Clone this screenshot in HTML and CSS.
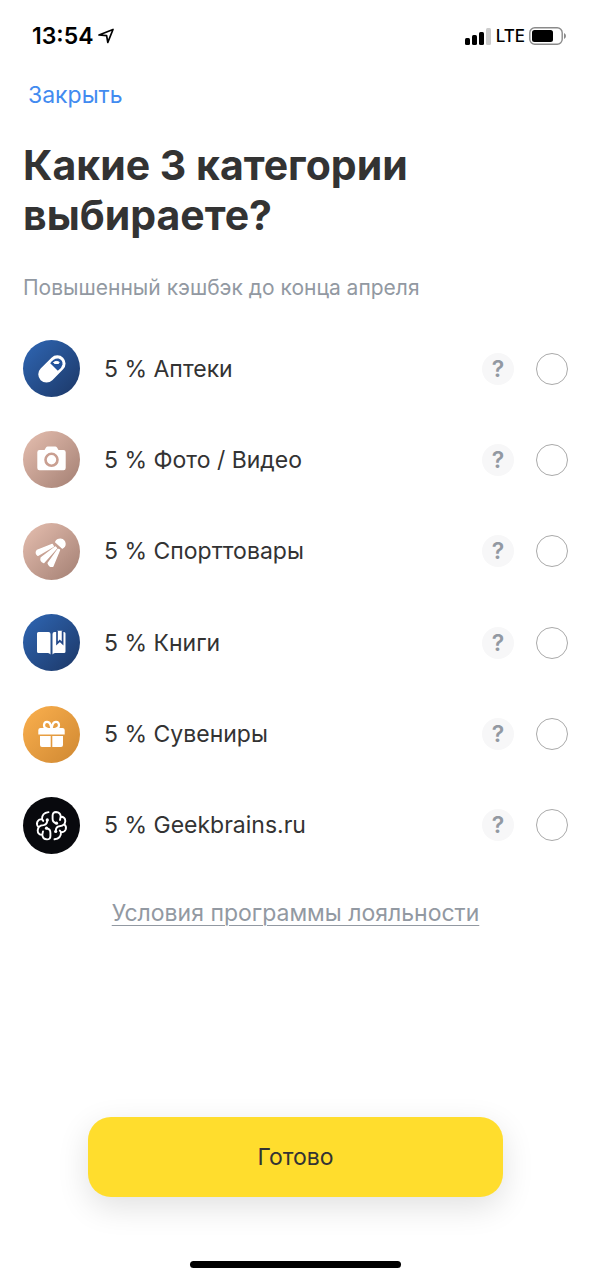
FILE: index.html
```html
<!DOCTYPE html>
<html lang="ru">
<head>
<meta charset="utf-8">
<meta name="viewport" content="width=device-width, initial-scale=1">
<title>Категории кэшбэка</title>
<link rel="stylesheet" href="styles.css">
</head>
<body>
<div class="screen">
  <header class="status">
    <div class="status-left">
      <span class="time">13:54</span>
      <svg class="location" viewBox="0 0 18 16" width="18" height="16" aria-hidden="true"><path d="M2 7 16 1.500 10.800 14.400 9.600 7.600Z" fill="none" stroke="#000" stroke-width="1.700" stroke-linejoin="round"/></svg>
    </div>
    <div class="status-right">
      <svg viewBox="0 0 27 17" width="27" height="17" aria-hidden="true"><rect x="0" y="10" width="5" height="7" rx="1.5"/><rect x="7" y="7" width="5" height="10" rx="1.5"/><rect x="14" y="4" width="5" height="13" rx="1.5"/><rect x="21" y="0" width="5" height="17" rx="1.5" fill="#ccc"/></svg>
      <span class="network">LTE</span>
      <svg viewBox="0 0 38 18" width="38" height="18" aria-hidden="true"><rect x=".8" y=".8" width="32.4" height="16.4" rx="5" fill="none" stroke="#8a8a8a" stroke-width="1.4"/><rect x="3" y="3" width="21" height="12" rx="2.5"/><path d="M35 6q2 1 2 3t-2 3Z" fill="#8a8a8a"/></svg>
    </div>
  </header>

  <nav class="nav"><button class="close" type="button">Закрыть</button></nav>

  <main class="content">
    <h1 class="title">Какие 3 категории выбираете?</h1>
    <p class="subtitle">Повышенный кэшбэк до конца апреля</p>

    <ul class="list">
      <li class="row">
        <svg class="icon blue" viewBox="0 0 57 57" aria-hidden="true">
          <path d="M23.500 34.300 34.300 23.500" stroke="#fff" stroke-width="16.500" stroke-linecap="round"/>
          <path d="M27.200 23.200Q31 17.800 35.500 18.500 40 20 39.500 24.500 38.800 28 34.800 30.800Z" fill="#24539b"/>
          <path d="M30.500 22.500Q33.200 20.400 36.200 22.200L35.500 23.500H31.500Z" fill="#fff" stroke="#fff" stroke-width="1" stroke-linejoin="round"/>
        </svg>
        <label class="name" for="c1">5 % Аптеки</label>
        <button class="help" type="button" aria-label="Подробнее: Аптеки">?</button>
        <input class="pick" id="c1" type="checkbox">
      </li>
      <li class="row">
        <svg class="icon rose" viewBox="0 0 57 57" aria-hidden="true">
          <path d="M16.500 19H21.500L23 16.500Q23.700 15.500 24.700 15.500H32.300Q33.300 15.500 34 16.500L35.500 19H40.500Q42.700 19 42.700 21.200V37Q42.700 39.200 40.500 39.200H16.500Q14.300 39.200 14.300 37V21.200Q14.300 19 16.500 19Z" fill="#fff"/>
          <circle cx="28.500" cy="28.800" r="6" fill="#fff" stroke="#c99f91" stroke-width="2.600"/>
        </svg>
        <label class="name" for="c2">5 % Фото / Видео</label>
        <button class="help" type="button" aria-label="Подробнее: Фото и видео">?</button>
        <input class="pick" id="c2" type="checkbox">
      </li>
      <li class="row">
        <svg class="icon rose" viewBox="0 0 57 57" aria-hidden="true">
          <g fill="#fff" stroke="#fff" stroke-width="1.400" stroke-linejoin="round">
            <path d="M29.300 21.500 14.200 27.300Q12.200 30 14.800 32.300L30.300 23.300Z"/>
            <path d="M32.300 24 18.200 34.800Q17.200 38.300 20.800 39.500L33.500 25.300Z"/>
            <path d="M35 26.300 25.200 40.200Q26.500 44 29.800 43.300L36.500 27Z"/>
            <path d="M32.700 19Q34 16.200 37.500 16.200 41.700 16.800 42 20.800 42 24 39.300 25Z"/>
          </g>
        </svg>
        <label class="name" for="c3">5 % Спорттовары</label>
        <button class="help" type="button" aria-label="Подробнее: Спорттовары">?</button>
        <input class="pick" id="c3" type="checkbox">
      </li>
      <li class="row">
        <svg class="icon blue" viewBox="0 0 57 57" aria-hidden="true">
          <path d="M15.500 18H25.500Q27.500 18 27.500 20V40.500Q26.500 39 25 39H15.500Q14 39 14 37.500V19.500Q14 18 15.500 18Z" fill="#fff"/>
          <path d="M29.500 40.500V20Q29.500 18 31.500 18H41Q42.500 18 42.500 19.500V37.500Q42.500 39 41 39H32Q30.500 39 29.500 40.500Z" fill="#fff"/>
          <path d="M34 16.800V29.500L36.800 26.800 39.600 29.500V16.800" fill="#fff" stroke="#24498a" stroke-width="1.700"/>
        </svg>
        <label class="name" for="c4">5 % Книги</label>
        <button class="help" type="button" aria-label="Подробнее: Книги">?</button>
        <input class="pick" id="c4" type="checkbox">
      </li>
      <li class="row">
        <svg class="icon orange" viewBox="0 0 57 57" aria-hidden="true">
          <path d="M17.500 22H39.500Q41.700 22 41.700 24V28.500H15.300V24Q15.300 22 17.500 22Z" fill="#fff"/>
          <path d="M17 30H27.700V41H19Q17 41 17 39ZM29.300 30H40V39Q40 41 38 41H29.300Z" fill="#fff"/>
          <path d="M28.500 23C26 23.500 20.500 22.500 21 18.800 21.500 15 26 15 27.300 18.300Q28 20 28.500 23 29 20 29.700 18.300C31 15 35.500 15 36 18.800 36.500 22.500 31 23.500 28.500 23Z" fill="none" stroke="#fff" stroke-width="2.200"/>
        </svg>
        <label class="name" for="c5">5 % Сувениры</label>
        <button class="help" type="button" aria-label="Подробнее: Сувениры">?</button>
        <input class="pick" id="c5" type="checkbox">
      </li>
      <li class="row">
        <svg class="icon black" viewBox="0 0 57 57" aria-hidden="true">
          <defs>
            <g id="lobe">
              <path d="M33.300 26.200Q29.500 25.500 29.600 21.500V18.500Q29.600 15 33 15 37.300 15.200 37.700 19.500 42.300 20 42.300 24 42 26 41.300 27.200 43.800 29.500 42.700 32.500 41.500 35.300 38 35.300 38.200 41.500 31.500 42.300M41.300 27.200Q39.500 29.300 36.500 29.300 33 29.600 32.700 34M37.700 19.500 37 23M38 35.300 36.800 33.500" fill="none" stroke="#fff" stroke-width="1.900" stroke-linecap="round" stroke-linejoin="round"/>
              <circle cx="33.500" cy="26.200" r="1.600" fill="#fff"/>
              <circle cx="32.700" cy="34.500" r="1.600" fill="#fff"/>
            </g>
          </defs>
          <use href="#lobe"/>
          <use href="#lobe" transform="rotate(180 28.500 28.700)"/>
        </svg>
        <label class="name" for="c6">5 % Geekbrains.ru</label>
        <button class="help" type="button" aria-label="Подробнее: Geekbrains.ru">?</button>
        <input class="pick" id="c6" type="checkbox">
      </li>
    </ul>

    <a class="terms" href="#">Условия программы лояльности</a>
  </main>

  <footer class="footer">
    <button class="done" type="button">Готово</button>
    <div class="home"></div>
  </footer>
</div>
</body>
</html>
```
FILE: styles.css
```css
* { box-sizing: border-box; }
body {
  margin: 0;
  background: #fff;
  color: #333;
  font-family: Inter, "Liberation Sans", sans-serif;
  font-size: 23px;
}
button { border: 0; padding: 0; background: none; font: inherit; color: inherit; }
svg { flex: none; display: block; }
.screen { min-height: 100vh; display: flex; flex-direction: column; }
.status {
  display: flex;
  justify-content: space-between;
  align-items: center;
  height: 72px;
  padding: 0 24px 0 32px;
  color: #000;
}
.status-left, .status-right { display: flex; align-items: center; gap: 4px; }
.time { font-size: 23px; font-weight: 600; }
.network { font-size: 17px; font-weight: 500; }
.nav { padding: 0 28px; }
.close { display: block; line-height: 46px; color: #428bf0; }
.content { display: flex; flex-direction: column; padding: 22px 23px 0; }
.title { margin: 0; max-width: 460px; font-size: 41px; line-height: 50px; font-weight: 700; }
.subtitle { margin: 36px 0 0; font-size: 21px; line-height: 24px; color: #9299a2; }
.list {
  display: flex;
  flex-direction: column;
  justify-content: space-between;
  min-height: 514px;
  margin: 40px 0 0;
  padding: 0;
  list-style: none;
}
.row { display: flex; align-items: center; }
.icon { width: 57px; height: 57px; border-radius: 50%; }
.blue { background: linear-gradient(135deg, #2f67b5, #1c3766); }
.rose { background: linear-gradient(135deg, #e6bfb0, #a37f73); }
.orange { background: linear-gradient(135deg, #fbb04e, #cf8832); }
.black { background: #08090d; }
.name { flex: 1; margin-left: 24px; }
.help {
  width: 32px;
  height: 32px;
  border-radius: 50%;
  background: #f7f7f8;
  color: #9299a2;
  font-size: 23px;
  font-weight: 600;
  line-height: 32px;
}
.pick {
  appearance: none;
  width: 32px;
  height: 32px;
  margin: 0 0 0 22px;
  border: 1px solid #aaa;
  border-radius: 50%;
}
.terms {
  align-self: center;
  margin-top: 44px;
  line-height: 30px;
  color: #9299a2;
  text-decoration: underline;
  text-decoration-thickness: 1px;
  text-underline-offset: 4px;
}
.footer {
  display: flex;
  flex-direction: column;
  align-items: center;
  gap: 64px;
  margin-top: auto;
  padding: 0 88px 12px;
}
.done {
  width: 100%;
  height: 80px;
  border-radius: 23px;
  background: #ffdd2d;
  box-shadow: 0 10px 32px rgba(0, 0, 0, .12);
}
.home { width: 211px; height: 7px; border-radius: 4px; background: #000; }
```
